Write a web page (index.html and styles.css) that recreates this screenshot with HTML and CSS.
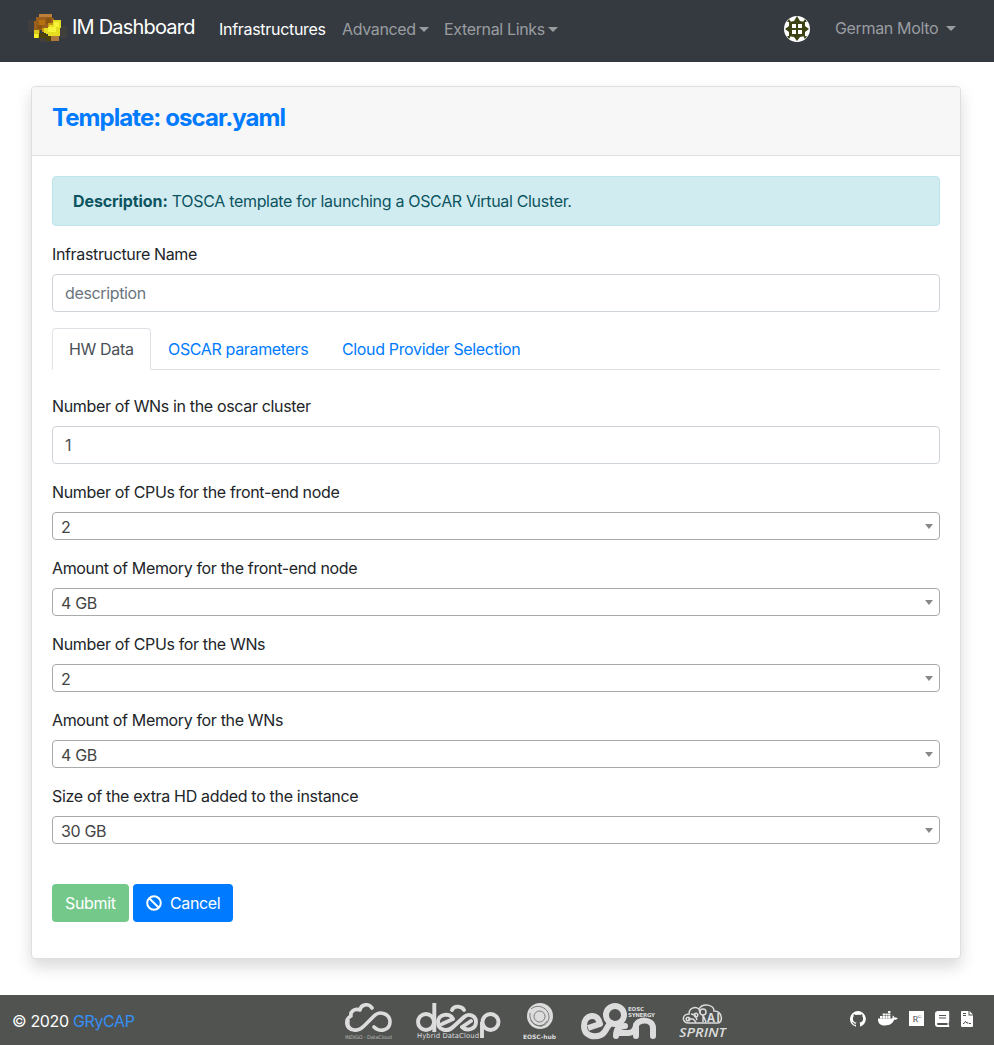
FILE: index.html
```html
<!DOCTYPE html>
<html lang="en">
<head>
<meta charset="utf-8">
<title>IM Dashboard</title>
<link rel="stylesheet" href="styles.css">
</head>
<body>
<nav class="navbar">
  <a class="brand">
    <svg class="brand-logo" viewBox="0 0 40 30" width="40" height="30">
      <path fill="#413f3d" d="M0 6h7v12H0zM32 12h7v12h-7zM11 24h16v4H11z"/>
      <path fill="#9a5f1d" d="M8 3h3V0h13v4h2v12H12v4H6V7h2z"/>
      <path fill="#bd8038" d="M11 0h13v3H11z"/>
      <path fill="#8a540f" d="M18 4h5v6h-5zM9 11h5v4H9z"/>
      <path fill="#b6720e" d="M11 6h6v5h-6z"/>
      <path fill="#c89b12" d="M20 9h7v5h-7zM14 14h6v4h-6z"/>
      <path fill="#e5dd20" d="M25 6h8v8h-1v8H20v-2h-4v-6h5v-3h4z"/>
      <path fill="#f7f33b" d="M26 8h5v5h-5zM20 13h8v5h-8z"/>
      <path fill="#d9cb1a" d="M6 16h5v8H6z"/>
      <path fill="#f5ef2d" d="M6 20h4v4H6z"/>
      <path fill="#4c4208" d="M11 19h7v5h-7zM18 22h5v5h-5z"/>
      <path fill="#b17a3c" d="M23 22h8v5h-8z"/>
    </svg>
    <span>IM Dashboard</span>
  </a>
  <a class="nav-link active">Infrastructures</a>
  <a class="nav-link caret">Advanced</a>
  <a class="nav-link caret links">External Links</a>
  <svg class="avatar" viewBox="0 0 26 26" width="26" height="26">
    <circle cx="13" cy="13" r="13" fill="#fff"/>
    <path fill="#3c4214" d="M13 0l3 5 5 1 0 4 4 3-4 3 0 4-5 1-3 4-3-4-5-1 0-4-4-3 4-3 0-4 5-1zM3 6l2-3 2 3zM19 6l2-3 2 3zM3 20l2 3 2-3zM19 20l2 3 2-3z"/>
    <path fill="#fff" d="M8 8h4v4H8zM14 8h4v4h-4zM8 14h4v4H8zM14 14h4v4h-4z"/>
  </svg>
  <a class="nav-link caret user">German Molto</a>
</nav>

<main class="card">
  <header class="card-header"><h1>Template: oscar.yaml</h1></header>
  <form class="card-body">
    <div class="alert"><b>Description:</b> <span>TOSCA template for launching a OSCAR Virtual Cluster.</span></div>
    <div class="group">
      <label>Infrastructure Name</label>
      <div class="input placeholder">description</div>
    </div>
    <div class="tabs">
      <a class="tab selected">HW Data</a>
      <a class="tab oscar">OSCAR parameters</a>
      <a class="tab cloud">Cloud Provider Selection</a>
    </div>
    <div class="group"><label>Number of WNs in the oscar cluster</label><div class="input">1</div></div>
    <div class="group"><label>Number of CPUs for the front-end node</label><div class="select">2</div></div>
    <div class="group"><label>Amount of Memory for the front-end node</label><div class="select">4 GB</div></div>
    <div class="group"><label>Number of CPUs for the WNs</label><div class="select">2</div></div>
    <div class="group"><label>Amount of Memory for the WNs</label><div class="select">4 GB</div></div>
    <div class="group"><label class="wide">Size of the extra HD added to the instance</label><div class="select">30 GB</div></div>
    <div class="actions">
      <a class="btn submit">Submit</a>
      <a class="btn cancel">
        <svg viewBox="0 0 16 16" width="16" height="16" fill="none" stroke="#fff" stroke-width="2"><circle cx="8" cy="8" r="6.800"/><path d="M3.200 3.200l9.600 9.600"/></svg>
        <span>Cancel</span>
      </a>
    </div>
  </form>
</main>

<footer class="footer">
  <div class="copy">© 2020 <a>GRyCAP</a></div>
  <div class="partners">
    <svg class="indigo" viewBox="0 0 48 38" width="48" height="38">
      <path fill="none" stroke="#dcdcdc" stroke-width="3.600" stroke-linecap="round" stroke-linejoin="round" d="M27 5C24 0 16 1 15 7C9 5 5 9 6 13C0 16 0 26 9 27C14 28 17 25 20 22L29 13C35 7 45 11 45 19C45 27 35 30 29 24M9 27C4 26 2 22 3 18"/>
      <text x="0" y="36" class="logo-text faint" font-size="5" textLength="47">INDIGO - DataCloud</text>
    </svg>
    <svg class="deep" viewBox="0 0 86 38" width="86" height="38">
      <g fill="none" stroke="#dcdcdc" stroke-width="3.900" stroke-linejoin="round" stroke-linecap="round">
        <circle cx="10" cy="19" r="8"/><path stroke-linecap="butt" d="M18.300 0v29M66 19v16"/><circle cx="74.500" cy="19" r="8"/>
        <path d="M26 21l11-5c-3-7-15-5-15 3 0 9 10 10 15 5l11-10c4-4 12-2 12 5 0 7-9 10-14 5l9-6"/>
        <path d="M36 7c2-5 10-4 12 0"/>
      </g>
      <text x="1" y="35" class="logo-text" font-size="6.800" textLength="62">Hybrid DataCloud</text>
    </svg>
    <svg class="hub" viewBox="0 0 34 38" width="34" height="38">
      <circle cx="17" cy="13" r="13" fill="#dcdcdc"/>
      <g fill="none" stroke="#6d6f6d" stroke-width=".9"><circle cx="16.500" cy="13.500" r="5.500"/><path d="M8 6c7-6 18-1 18 8 0 5-4 9-9 9M7 10c-1 8 4 13 12 13M24 18c-4 7-13 6-16-1"/></g>
      <text x="0" y="36" class="logo-text heavy" font-size="6" textLength="33">EOSC-hub</text>
    </svg>
    <svg class="synergy" viewBox="0 0 76 38" width="76" height="38">
      <g fill="none" stroke="#dcdcdc" stroke-width="6" stroke-linejoin="round">
        <path d="M7 25l12-4C17 9 3 11 3 23c0 10 10 12 17 9 7-3 5-12 12-12"/><circle cx="34" cy="12" r="9"/>
        <path stroke-linecap="round" d="M44 23c-7 0-9 4-9 10M36 30h11c5 0 8-4 8-8M55 33V23c1-7 17-8 17 2v8"/>
      </g>
      <text x="47" y="8" class="logo-text heavy" font-size="5.500" textLength="16">EOSC</text>
      <text x="47" y="14" class="logo-text heavy" font-size="5.500" textLength="27">SYNERGY</text>
    </svg>
    <svg class="sprint" viewBox="0 0 48 38" width="48" height="38">
      <g fill="none" stroke="#dcdcdc" stroke-width="1.500">
        <path d="M10 20C2 20 3 11 10 11c0-6 6-8 10-5 4-7 15-4 15 2 9 0 9 12 4 12zM9 16h5l3 3M12 11l4 1 2 5M20 6l1 4M24 19V12M27 19l-3-7"/>
        <circle cx="9" cy="16" r="1.800"/><circle cx="17" cy="12" r="1.800"/><circle cx="24" cy="9" r="3"/>
      </g>
      <text x="28" y="19" class="logo-text ai" font-size="11.500" textLength="13">AI</text>
      <text x="0" y="34" class="logo-text sprint-text" font-size="13" textLength="47" lengthAdjust="spacingAndGlyphs">SPRINT</text>
    </svg>
  </div>
  <div class="icons">
    <svg viewBox="0 0 16 16" width="16" height="16"><path fill="#fff" d="M8 0a8 8 0 0 0-2.500 15.600c.4.100.5-.2.500-.4v-1.500c-2.200.500-2.700-1-2.700-1-.4-.9-.9-1.200-.9-1.200-.7-.5.100-.5.100-.5.800.1 1.200.8 1.200.8.700 1.300 1.900.9 2.300.7.100-.5.300-.9.500-1.100-1.800-.2-3.600-.9-3.600-4 0-.9.300-1.600.8-2.100-.1-.2-.4-1 .1-2.100 0 0 .7-.2 2.200.8a7.700 7.700 0 0 1 4 0c1.500-1 2.200-.8 2.200-.8.400 1.100.2 1.900.1 2.100.5.600.8 1.300.8 2.100 0 3.100-1.900 3.800-3.700 4 .3.300.6.800.6 1.500v2.200c0 .2.100.5.600.4A8 8 0 0 0 8 0z"/></svg>
    <svg viewBox="0 0 20 16" width="20" height="16"><path fill="#fff" d="M2 5h2.300v2.200H2zM4.700 5H7v2.200H4.700zM7.400 5h2.300v2.200H7.400zM10.100 5h2.300v2.200h-2.300zM4.700 2.400H7v2.200H4.700zM7.400 2.400h2.300v2.200H7.400zM10.100 2.400h2.300v2.200h-2.300zM10.100 0h2.300v2h-2.300zM0 7.600h14c.9-.5.5-1.900.6-3.100 1.300.6 1.700 1.500 1.700 2.100 1.200-.3 2.600-.1 3.400.4-.5 1.300-1.700 1.800-3.500 1.800C14.800 12.500 11.500 14.500 7 14.500 2.500 14.500-.3 12.200 0 7.600z"/></svg>
    <svg viewBox="0 0 15 15" width="15" height="15"><path fill="#fff" d="M0 0h15v15H0z"/><text x="3.500" y="11" class="rg">R</text><text x="9" y="7" class="rg small">G</text></svg>
    <svg viewBox="0 0 15 16" width="15" height="16"><path fill="#fff" d="M3 0h10.500q.7 0 .7.700v10q0 .5-.5.800v2.500h.5v2H3a3 3 0 0 1-3-3V3a3 3 0 0 1 3-3z"/><path fill="#515351" d="M4 4h7v1H4zM4 6.500h7v1H4zM3 12h9.500v2H3a1 1 0 0 1 0-2z"/></svg>
    <svg viewBox="0 0 12 16" width="12" height="16"><path fill="#fff" d="M1 0h6.500v4.500H12V15q0 1-1 1H1q-1 0-1-1V1q0-1 1-1zM8.500 0L12 3.500H8.500z"/><path fill="none" stroke="#515351" d="M2 2.500h3M2 4.500h3M2 12.500h1l1.500-2.200 1.500 2 1-.8 1 1h2"/></svg>
  </div>
</footer>
</body>
</html>
```
FILE: styles.css
```css
* { box-sizing: border-box; }
body { margin: 0; height: 1045px; display: flex; flex-direction: column; background: #fff; color: #212529; font: 16px/24px Inter, "Liberation Sans", sans-serif; letter-spacing: -0.35px; white-space: nowrap; }
svg { display: block; flex: none; }
.navbar { height: 62px; background: #343a40; display: flex; align-items: flex-start; color: #9a9da0; }
.brand { display: flex; width: 219px; padding: 14px 0 0 28px; color: #fff; font-size: 20px; line-height: 27px; letter-spacing: -0.8px; }
.brand span { margin-left: 4px; }
.nav-link { padding-top: 17px; }
.nav-link.active { color: #fff; width: 123px; letter-spacing: -0.3px; }
.caret { display: flex; align-items: center; width: 102px; }
.caret::after { content: ""; margin-left: 3px; border: 5px solid transparent; border-top-color: currentColor; border-bottom: 0; }
.links { width: 340px; }
.avatar { margin-top: 16px; width: 26px; }
.user { margin-left: 25px; padding-top: 16px; width: auto; }
.user::after { margin-left: 8px; }
.card { margin: 24px 33px 0 31px; height: 873px; flex: none; border: 1px solid #dfdfdf; border-radius: 4px; background: #fff; box-shadow: 0 8px 16px rgba(0,0,0,.15); }
.card-header { height: 69px; padding: 16px 20px; background: #f7f7f7; border-bottom: 1px solid #dfdfdf; border-radius: 3px 3px 0 0; }
h1 { margin: 0; font-size: 24px; line-height: 29px; color: #007bff; letter-spacing: -0.93px; }
.card-body { padding: 20px; }
.alert { height: 50px; padding: 12px 20px; border: 1px solid #bee5eb; border-radius: 4px; color: #0c5460; background: #d1ecf1; margin-bottom: 16px; letter-spacing: -0.32px; }
.alert b { letter-spacing: -0.1px; }
.group { margin-bottom: 16px; }
label { display: block; margin-bottom: 8px; }
label.wide { letter-spacing: -0.32px; }
.input { height: 38px; border: 1px solid #ced4da; border-radius: 4px; padding: 6px 12px; color: #495057; }
.placeholder { color: #6c757d; }
.tabs { height: 42px; border-bottom: 1px solid #dee2e6; display: flex; margin-bottom: 24px; color: #007bff; }
.tab { height: 42px; padding: 9px 17px; }
.selected { width: 99px; padding-left: 16px; border: 1px solid #dee2e6; border-bottom-color: #fff; border-radius: 4px 4px 0 0; color: #495057; padding-top: 8px; }
.oscar { width: 174px; }
.select { height: 28px; border: 1px solid #aaa; border-radius: 4px; padding: 2px 6px 0 8px; color: #444; display: flex; justify-content: space-between; }
.select::after { content: ""; margin-top: 9px; border: 4px solid transparent; border-top: 5px solid #888; border-bottom: 0; height: 5px; }
.actions { margin-top: 40px; display: flex; gap: 4px; color: #fff; }
.btn { height: 38px; border-radius: 4px; padding: 7px 13px; display: flex; align-items: center; }
.submit { width: 77px; background: #74c88a; }
.cancel { width: 100px; background: #007bff; gap: 8px; }
.footer { margin-top: 36px; height: 50px; background: #515351; display: flex; color: #fff; }
.copy { width: 345px; padding: 14px 12px; }
.copy a { color: #3490f5; }
.partners { display: flex; padding-top: 8px; width: 505px; }
.deep { margin-left: 23px; }
.hub { margin-left: 21px; }
.synergy { margin-left: 24px; }
.sprint { margin-left: 22px; }
.logo-text { font-family: "DejaVu Sans", sans-serif; fill: #dcdcdc; letter-spacing: 0; }
.faint { fill: #b5b6b5; }
.heavy { font-weight: bold; }
.ai { font-family: "Open Sans", sans-serif; font-weight: bold; }
.sprint-text { font-family: "Open Sans", sans-serif; font-weight: 600; font-style: italic; }
.icons { display: flex; gap: 12px; padding-top: 16px; }
.icons svg:nth-child(n+3) { margin-left: -1px; }
.rg { font: 9px "Liberation Serif", serif; fill: #515351; }
.rg.small { font-size: 5px; }
```
